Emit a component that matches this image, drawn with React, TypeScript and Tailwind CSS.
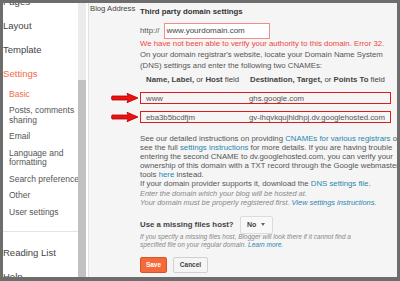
import React from 'react';

const Arrow: React.FC = () => (
  <svg width="28" height="11" viewBox="0 0 28 11" className="absolute right-full mr-[2px] top-1/2 -translate-y-1/2">
    <path d="M1 3.5 L17 3.5 L16 0.8 L27 5.5 L16 10.2 L17 7.5 L1 7.5 Q0 5.5 1 3.5 Z" fill="#ee1111" stroke="#b00000" strokeWidth="0.8" />
  </svg>
);

const App: React.FC = () => {
  const mainTop = ['Pages', 'Layout', 'Template'];
  const subItems = [
    { lines: ['Basic'], active: true },
    { lines: ['Posts, comments', 'sharing'] },
    { lines: ['Email'] },
    { lines: ['Language and', 'formatting'] },
    { lines: ['Search preferences'] },
    { lines: ['Other'] },
    { lines: ['User settings'] },
  ];

  return (
    <div className="w-[400px] h-[281px] bg-[#6d6d6d] pt-[3px] px-[3px] pb-[4px] overflow-hidden font-['Liberation_Sans',Arial,sans-serif]">
      <div className="flex h-full bg-white overflow-hidden">
        {/* Sidebar */}
        <div className="w-[75px] shrink-0 overflow-hidden">
          <div className="-mt-[13px]">
            {mainTop.map((item) => (
              <div key={item} className="h-[24px] flex items-center text-[9.5px] text-[#444] whitespace-nowrap">
                {item}
              </div>
            ))}
            <div className="h-[24px] flex items-center text-[9.6px] text-[#f26b4b]">Settings</div>
            <div className="pl-[6px]">
              {subItems.map((s) => (
                <div
                  key={s.lines[0]}
                  className={`py-[3.5px] text-[8.5px] leading-[9.5px] whitespace-nowrap ${s.active ? 'text-[#f26b4b]' : 'text-[#555]'}`}
                >
                  {s.lines.map((l) => (
                    <div key={l}>{l}</div>
                  ))}
                </div>
              ))}
            </div>
            <div className="mt-[10px] border-t border-[#e3e3e3] pt-[10px]">
              <div className="h-[24px] flex items-center text-[9.5px] text-[#444]">Reading List</div>
              <div className="h-[24px] flex items-center text-[9.5px] text-[#444]">Help</div>
            </div>
          </div>
        </div>

        {/* Scrollbar */}
        <div className="w-[8px] shrink-0 flex flex-col">
          <div className="h-[77px] bg-[#ebebeb]"></div>
          <div className="flex-1 bg-[#c1c1c1]"></div>
        </div>
        <div className="w-[2px] shrink-0 bg-white"></div>

        {/* Content */}
        <div className="flex-1 bg-[#f5f5f5] border-l border-[#e2e2e2] overflow-hidden flex text-[#555] text-[7.8px]">
          <div className="w-[51px] shrink-0 pl-[1px] pt-[0.5px] text-[7.7px] leading-[10px] text-[#444] whitespace-nowrap">
            Blog Address
          </div>
          <div className="w-[300px] shrink-0 flex flex-col whitespace-nowrap">
            <div className="mt-[4px] leading-[10px] font-bold text-[7.8px] text-[#333]">Third party domain settings</div>

            <div className="mt-[6px] h-[16px] flex items-center gap-[4px]">
              <span className="text-[#555]">http://</span>
              <div className="w-[106px] h-[16px] bg-white border border-[#f28b8b] flex items-center pl-[2px] text-[#444] text-[8px]">
                www.yourdomain.com
              </div>
            </div>

            <div className="leading-[10px] text-[#ef4444]">
              We have not been able to verify your authority to this domain. Error 32.
            </div>

            <div className="mt-[1px] leading-[10.7px]">
              On your domain registrar's website, locate your Domain Name System
              <br />
              (DNS) settings and enter the following two CNAMEs:
            </div>

            <div className="mt-[3.5px] leading-[10px] flex text-[#444]">
              <div className="w-[110px] pl-[6px]">
                <b>Name,</b> <b>Label,</b> or <b>Host</b> field
              </div>
              <div>
                <b>Destination,</b> <b>Target,</b> or <b>Points To</b> field
              </div>
            </div>

            <div className="relative mt-[7.5px] w-[251px] h-[12px] border-[1.5px] border-[#e11b1b] flex items-center text-[#555]">
              <Arrow />
              <div className="w-[108px] pl-[5px]">www</div>
              <div>ghs.google.com</div>
            </div>
            <div className="relative mt-[7px] w-[251px] h-[12px] border-[1.5px] border-[#e11b1b] flex items-center text-[#555]">
              <Arrow />
              <div className="w-[108px] pl-[5px]">eba3b5bcdfjm</div>
              <div>gv-lhqvkqujhldhpj.dv.googlehosted.com</div>
            </div>

            <div className="mt-[10.5px] leading-[9px]">
              See our detailed instructions on providing <span className="text-[#2a86ad]">CNAMEs for various registrars</span> or
              <br />
              see the full <span className="text-[#2a86ad]">settings instructions</span> for more details. If you are having trouble
              <br />
              entering the second CNAME to dv.googlehosted.com, you can verify your
              <br />
              ownership of this domain with a TXT record through the Google webmaster
              <br />
              tools <span className="text-[#2a86ad]">here</span> instead.
              <br />
              If your domain provider supports it, download the <span className="text-[#2a86ad]">DNS settings file</span>.
            </div>

            <div className="mt-[1px] leading-[9px] italic text-[7.4px] text-[#888]">
              Enter the domain which your blog will be hosted at.
              <br />
              Your domain must be properly registered first. <span className="text-[#2a86ad]">View settings instructions.</span>
            </div>

            <div className="mt-[9px] h-[18px] flex items-center gap-[4px]">
              <span className="font-bold text-[#444]">Use a missing files host?</span>
              <div className="ml-[2px] w-[33px] h-[18px] bg-[#f8f8f8] border border-[#dcdcdc] rounded-[2px] flex items-center justify-center gap-[5px] text-[7px] font-bold text-[#444]">
                No
                <span className="w-0 h-0 border-l-[2.5px] border-r-[2.5px] border-t-[3px] border-l-transparent border-r-transparent border-t-[#666]"></span>
              </div>
            </div>

            <div className="-mt-[1px] leading-[7.7px] italic text-[6.5px] text-[#888]">
              If you specify a missing files host, Blogger will look there if it cannot find a
              <br />
              specified file on your regular domain. <span className="text-[#2a86ad]">Learn more.</span>
            </div>

            <div className="mt-[8.5px] flex gap-[6px]">
              <button className="w-[27px] h-[16px] bg-[#f46a3b] border border-[#d5542a] rounded-[2px] text-white text-[6.5px] font-bold">
                Save
              </button>
              <button className="w-[35px] h-[16px] bg-[#f5f5f5] border border-[#d0d0d0] rounded-[2px] text-[#444] text-[6.5px] font-bold">
                Cancel
              </button>
            </div>
          </div>
        </div>
      </div>
    </div>
  );
};

export default App;
